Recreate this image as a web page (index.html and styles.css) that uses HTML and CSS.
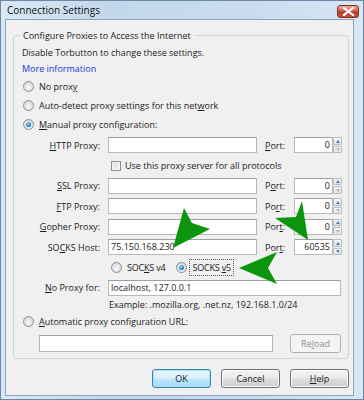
FILE: index.html
```html
<!DOCTYPE html>
<html>
<head>
<meta charset="utf-8">
<link rel="stylesheet" href="styles.css">
</head>
<body>
<div class="window">
  <div class="titlebar">
    <span class="title">Connection Settings</span>
    <span class="close"><svg width="13" height="9" viewBox="0 0 13 9"><path d="M2 1 L11 8 M11 1 L2 8" stroke="#fff" stroke-width="2.2" stroke-linecap="square"/></svg></span>
  </div>
  <div class="client">
    <fieldset class="group">
      <legend>Configure Proxies to Access the Internet</legend>
      <div class="line">Disable Torbutton to change these settings.</div>
      <div class="line link">More information</div>
      <div class="radio-row"><span class="radio"></span><span>No prox<u>y</u></span></div>
      <div class="radio-row"><span class="radio"></span><span>Auto-detect proxy settings for this net<u>w</u>ork</span></div>
      <div class="radio-row"><span class="radio on"></span><span><u>M</u>anual proxy configuration:</span></div>

      <div class="proxy-grid">
        <span class="lbl"><u>H</u>TTP Proxy:</span>
        <span class="input"></span>
        <span class="plbl"><u>P</u>ort:</span>
        <span class="port"><span class="input num">0</span><span class="spin"><span class="up"></span><span class="down off"></span></span></span>

        <span class="check-row"><span class="checkbox"></span><span>Use this proxy server for all protocols</span></span>

        <span class="lbl"><u>S</u>SL Proxy:</span>
        <span class="input"></span>
        <span class="plbl">P<u>o</u>rt:</span>
        <span class="port"><span class="input num">0</span><span class="spin"><span class="up"></span><span class="down off"></span></span></span>

        <span class="lbl"><u>F</u>TP Proxy:</span>
        <span class="input"></span>
        <span class="plbl">Po<u>r</u>t:</span>
        <span class="port"><span class="input num">0</span><span class="spin"><span class="up"></span><span class="down off"></span></span></span>

        <span class="lbl"><u>G</u>opher Proxy:</span>
        <span class="input"></span>
        <span class="plbl">Por<u>t</u>:</span>
        <span class="port"><span class="input num">0</span><span class="spin"><span class="up"></span><span class="down off"></span></span></span>

        <span class="lbl">SO<u>C</u>KS Host:</span>
        <span class="input val">75.150.168.230</span>
        <span class="plbl">Por<u>t</u>:</span>
        <span class="port"><span class="input num">60535</span><span class="spin"><span class="up"></span><span class="down"></span></span></span>

        <span class="socks-row">
          <span class="socks"><span class="radio"></span><span class="stext">SOC<u>K</u>S v4</span></span>
          <span class="socks"><span class="radio on"></span><span class="stext focus">SOCKS <u>v</u>5</span></span>
        </span>

        <span class="lbl"><u>N</u>o Proxy for:</span>
        <span class="input val wide">localhost, 127.0.0.1</span>

        <span class="example">Example: .mozilla.org, .net.nz, 192.168.1.0/24</span>
      </div>

      <div class="radio-row auto"><span class="radio"></span><span><u>A</u>utomatic proxy configuration URL:</span></div>
      <div class="url-row">
        <span class="input url"></span>
        <span class="btn disabled">Re<u>l</u>oad</span>
      </div>
    </fieldset>
    <div class="buttons">
      <span class="btn default">OK</span>
      <span class="btn">Cancel</span>
      <span class="btn"><u>H</u>elp</span>
    </div>
  </div>
  <svg class="arrows" width="364" height="400" viewBox="0 0 364 400">
    <polygon points="173,248 184,208 192,223 210,229" fill="#0d960d"/>
    <polygon points="308,240 302,201 296,217 275,218" fill="#0d960d"/>
    <polygon points="239,268 277,252 268,268 277,284" fill="#0d960d"/>
  </svg>
</div>
</body>
</html>
```
FILE: styles.css
```css
* { box-sizing: border-box; }
html, body { margin: 0; padding: 0; }
body {
  width: 364px;
  height: 400px;
  overflow: hidden;
  font-family: "Open Sans", "Noto Sans", sans-serif;
  font-size: 9px;
  color: #1b1b1b;
  background: #fff;
}
u { text-decoration: underline; text-underline-offset: 1px; }

.window {
  position: relative;
  width: 364px;
  height: 400px;
  border: 1px solid #6d88a6;
  background: linear-gradient(90deg, #dbe8f5, #c3d7ec 30%, #c9dcef 70%, #d8e6f4);
  display: flex;
  flex-direction: column;
}
.titlebar {
  height: 18px;
  flex: none;
  display: flex;
  align-items: center;
  justify-content: space-between;
  padding: 0 4px 0 6px;
}
.title { font-size: 10px; color: #111; }
.close {
  width: 22px;
  height: 13px;
  margin-top: 2px;
  border: 1px solid #7d3329;
  border-radius: 3px;
  background: linear-gradient(#eaa897, #d0614f 45%, #b83a2b 55%, #c9503d);
  display: flex;
  align-items: center;
  justify-content: center;
}

.client {
  flex: 1;
  margin: 0 9px 3px 4px;
  background: #f0f0f0;
  border: 1px solid #8ea4ba;
  padding: 9px 0 0 7px;
  display: flex;
  flex-direction: column;
}

.group {
  margin: 0;
  width: 336px;
  border: 1px solid #d0d7dc;
  border-radius: 3px;
  padding: 3px 0 5px 8px;
}
.group legend {
  padding: 0 3px;
  margin-left: -2px;
  line-height: 13px;
  height: 13px;
}

.line { height: 16px; line-height: 16px; white-space: nowrap; }
.link { color: #1637e0; }

.radio-row {
  height: 19px;
  display: flex;
  align-items: center;
  gap: 5px;
  white-space: nowrap;
}
.radio {
  width: 11px;
  height: 11px;
  flex: none;
  margin-left: 1px;
  border-radius: 50%;
  border: 1px solid #8e8f8f;
  background: radial-gradient(circle at 50% 60%, #fbfbfb, #dcdcdc 70%, #cfcfcf);
  display: inline-flex;
  align-items: center;
  justify-content: center;
}
.radio.on::after {
  content: "";
  width: 5px;
  height: 5px;
  border-radius: 50%;
  background: radial-gradient(circle at 40% 35%, #9fdcff, #1a7fd0 60%, #0d4f8f);
}

.proxy-grid {
  margin-top: 1px;
  display: grid;
  grid-template-columns: 78px 149px 21px 48px;
  grid-auto-rows: 20.4px;
  column-gap: 8px;
  align-items: center;
}
.lbl { text-align: right; white-space: nowrap; }
.plbl { white-space: nowrap; }
.input {
  height: 16px;
  background: #fff;
  border: 1px solid #b5b9bf;
  border-top-color: #9ba0a6;
  line-height: 14px;
  padding: 0 2px;
  white-space: nowrap;
  display: block;
}
.val { padding-left: 2px; }
.wide { grid-column: 2 / 5; margin-right: 1px; }
.port { display: flex; align-items: center; }
.port .input { width: 39px; text-align: right; padding-right: 2px; }
.spin {
  width: 9px;
  height: 16px;
  display: flex;
  flex-direction: column;
  gap: 1px;
}
.spin span {
  flex: 1;
  border: 1px solid #b7bcc2;
  border-radius: 1px;
  background: linear-gradient(#f7f7f7, #e3e3e3);
  position: relative;
}
.spin span::after {
  content: "";
  position: absolute;
  left: 1.5px;
  top: 1.5px;
  border-left: 2px solid transparent;
  border-right: 2px solid transparent;
}
.spin .up::after { border-bottom: 3px solid #4c7fc0; }
.spin .down::after { border-top: 3px solid #4c7fc0; }
.spin .down.off::after { border-top-color: #b0b6bd; }

.check-row {
  grid-column: 2 / 5;
  display: flex;
  align-items: center;
  gap: 4px;
  padding-left: 3px;
  white-space: nowrap;
}
.checkbox {
  width: 10px;
  height: 10px;
  border: 1px solid #8f8f8f;
  background: linear-gradient(135deg, #dadada, #f8f8f8);
  box-shadow: inset 0 0 0 1px #f4f4f4;
}

.socks-row {
  grid-column: 2 / 5;
  display: flex;
  align-items: center;
  padding-left: 2px;
  gap: 7px;
}
.socks { display: flex; align-items: center; gap: 2px; }
.stext { padding: 1px 2px; white-space: nowrap; border: 1px solid transparent; letter-spacing: -0.2px; }
.stext.focus { border: 1px dotted #555; }

.example {
  grid-column: 2 / 5;
  height: 12px;
  line-height: 12px;
  padding-left: 1px;
  white-space: nowrap;
  align-self: start;
  margin-top: 1px;
}

.auto { height: 22px; margin-top: -8px; }
.url-row {
  margin-top: 1px;
  display: flex;
  align-items: center;
  gap: 17px;
  padding-left: 17px;
}
.url { width: 234px; height: 17px; }

.btn {
  display: flex;
  align-items: center;
  justify-content: center;
  height: 19px;
  width: 59px;
  border: 1px solid #707070;
  border-radius: 3px;
  background: linear-gradient(#f2f2f2, #ebebeb 48%, #dddddd 52%, #cfcfcf);
  box-shadow: inset 0 0 0 1px #fcfcfc;
  white-space: nowrap;
}
.btn.disabled {
  width: 51px;
  color: #8d8d8d;
  border-color: #adb2b5;
  background: #f4f4f4;
  box-shadow: none;
}
.btn.default {
  border-color: #3c7fb1;
  box-shadow: inset 0 0 0 1px #a6e5f8;
  background: linear-gradient(#eaf6fd, #d9f0fc 48%, #bee6fd 52%, #a7d9f5);
}
.buttons {
  display: flex;
  justify-content: flex-end;
  gap: 10px;
  width: 336px;
  margin-top: 10px;
}

.arrows {
  position: absolute;
  left: -1px;
  top: -1px;
  pointer-events: none;
}
```
